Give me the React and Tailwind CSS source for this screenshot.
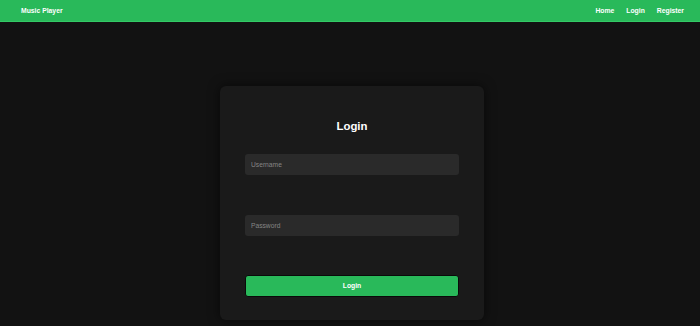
export default function App() {
  return (
    <div className="min-h-screen bg-[#121212] font-['Liberation_Sans',Arial,sans-serif]">
      <header className="h-[22px] bg-[#29b95a] border-b border-[#33c965] flex items-center justify-between pl-[21px] pr-[16px] pt-[2px] text-white font-bold text-[6.8px]">
        <span>Music Player</span>
        <nav className="flex gap-[12px]">
          <a>Home</a>
          <a>Login</a>
          <a>Register</a>
        </nav>
      </header>

      <div className="flex justify-center pl-[4px] pt-[64px]">
        <div className="w-[264px] h-[234px] bg-[#1a1a1a] rounded-[6px] shadow-[0_0_12px_rgba(0,0,0,0.6)] px-[25px] pt-[33px]">
          <h2 className="text-center text-white font-bold text-[11.4px] leading-[14px] mb-[21px]">
            Login
          </h2>
          <form className="flex flex-col">
            <input
              type="text"
              placeholder="Username"
              className="h-[21px] w-full rounded-[3px] bg-[#2a2a2a] px-[6px] text-[6.7px] text-white placeholder:text-[#858585] outline-none"
            />
            <input
              type="password"
              placeholder="Password"
              className="mt-[40px] h-[21px] w-full rounded-[3px] bg-[#2a2a2a] px-[6px] text-[6.7px] text-white placeholder:text-[#858585] outline-none"
            />
            <button
              type="button"
              className="mt-[39px] h-[22px] w-full rounded-[3px] bg-[#29b95a] border border-[#0a0a0a] text-white font-bold text-[6.8px]"
            >
              Login
            </button>
          </form>
        </div>
      </div>
    </div>
  );
}
